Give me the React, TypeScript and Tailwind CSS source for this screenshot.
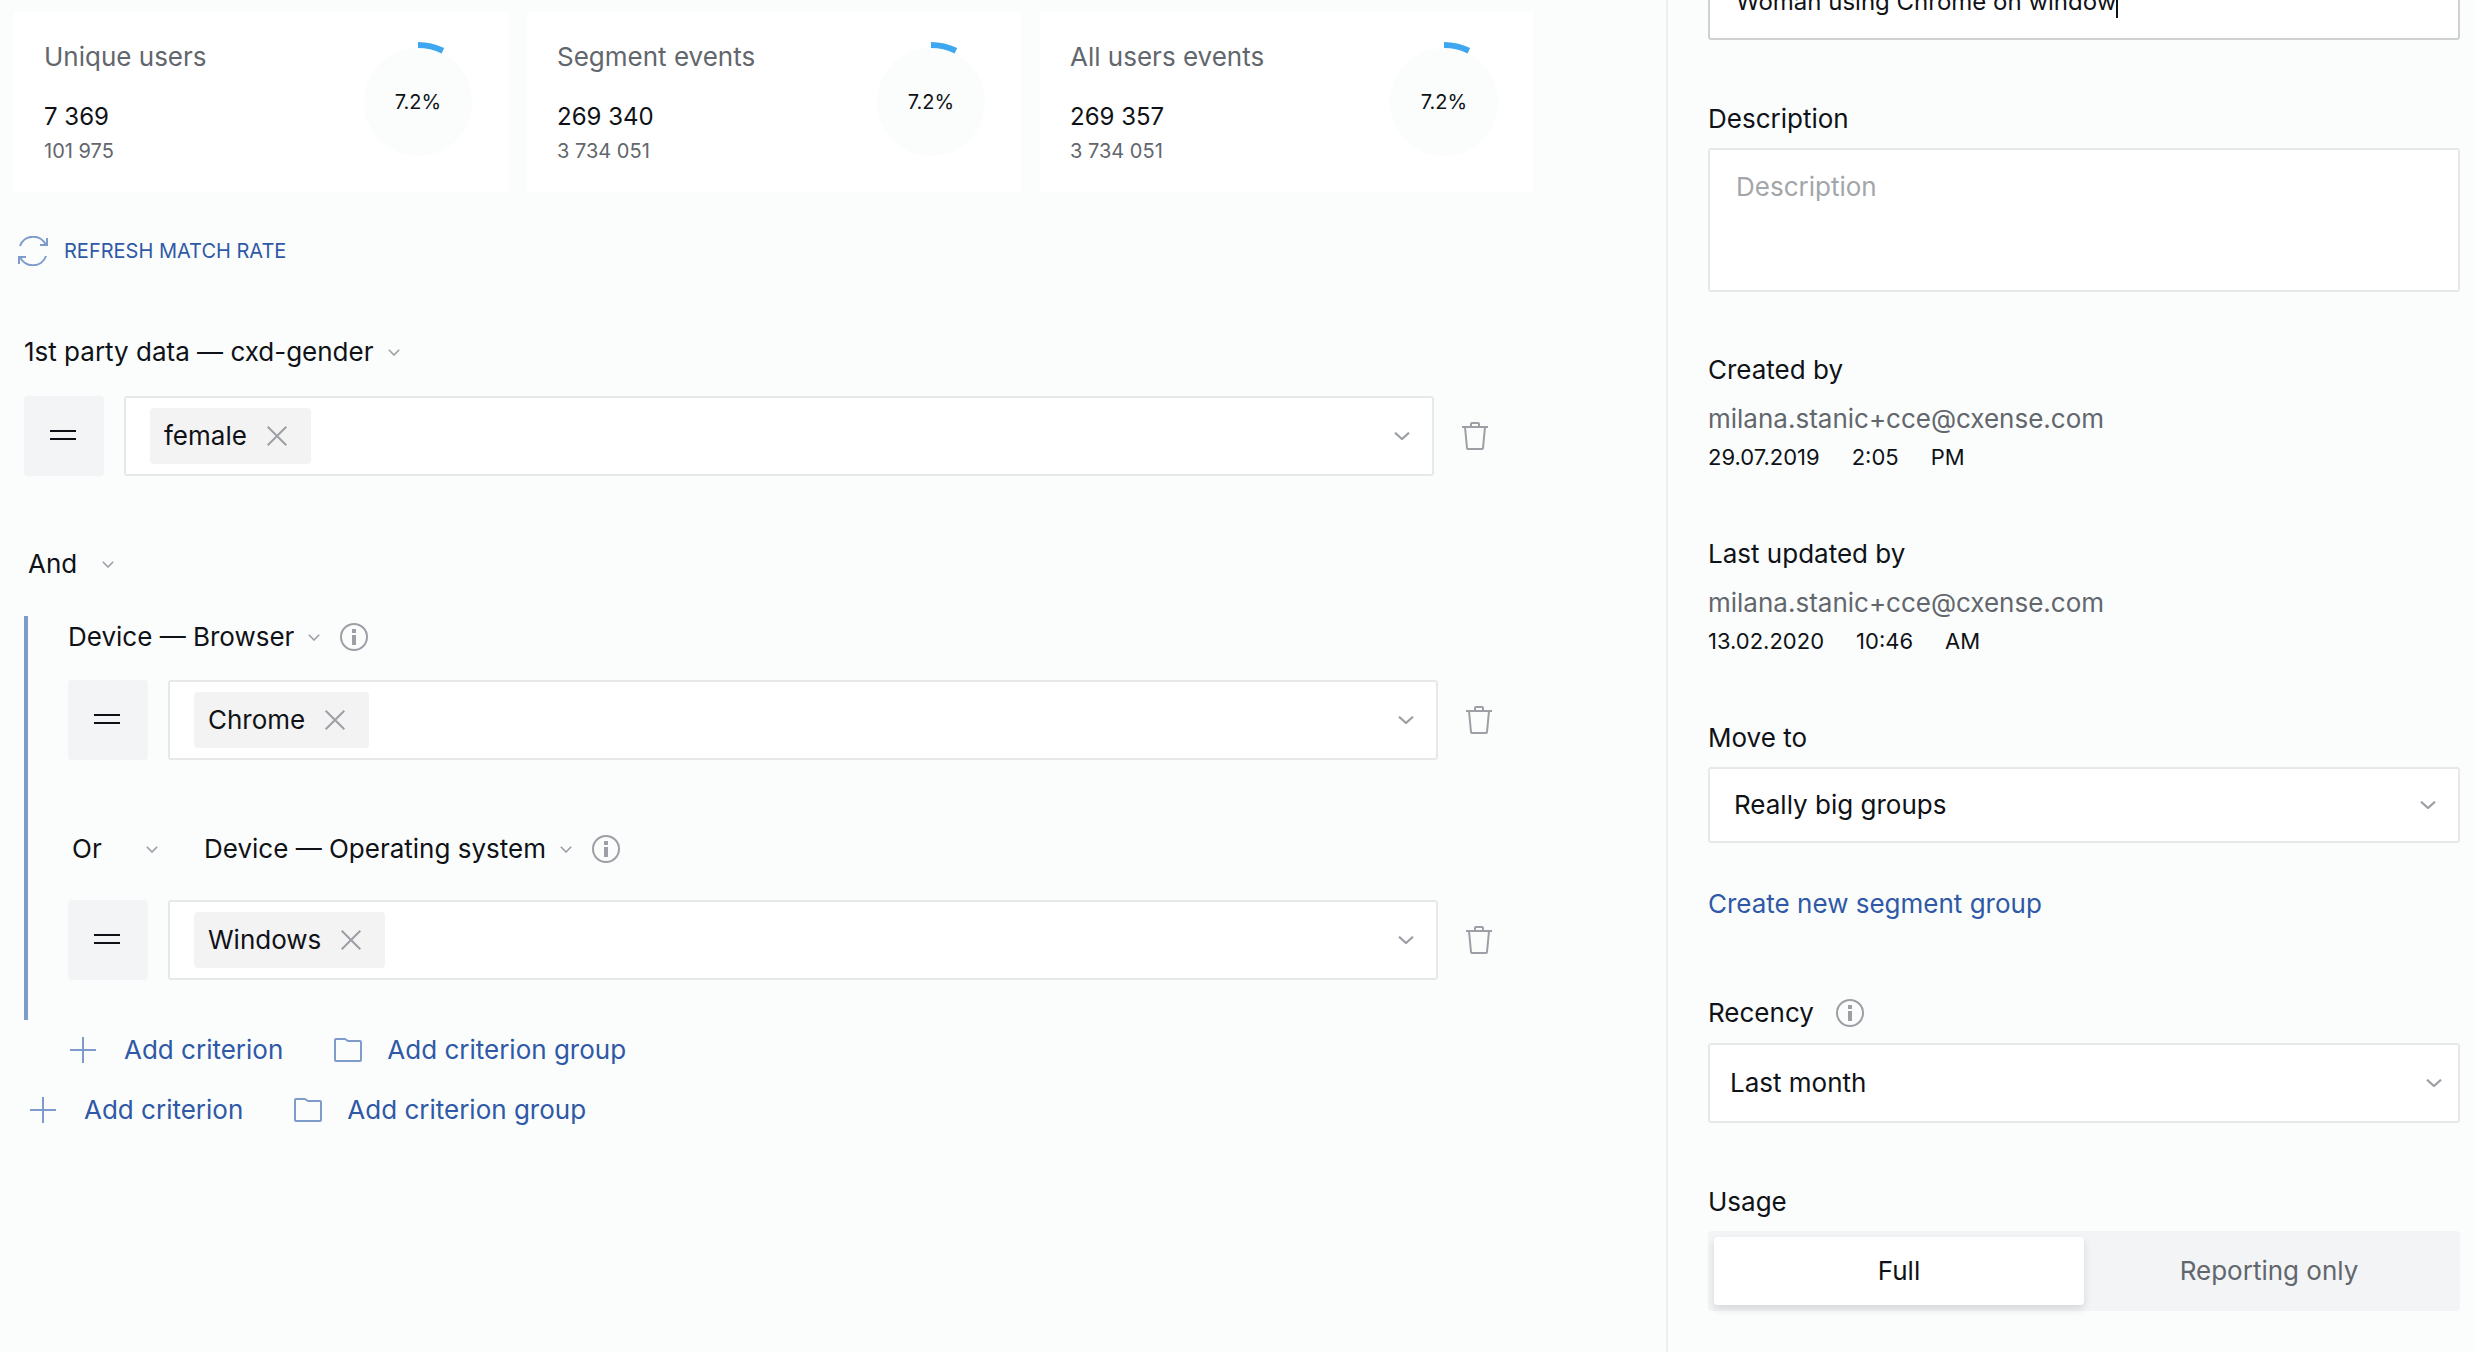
import { useId, useState } from "react";
import type { ReactNode } from "react";

const stats = [
  { label: "Unique users", value: "7 369", total: "101 975", percent: 7.2 },
  { label: "Segment events", value: "269 340", total: "3 734 051", percent: 7.2 },
  { label: "All users events", value: "269 357", total: "3 734 051", percent: 7.2 },
];

function Chevron({ small = false }: { small?: boolean }) {
  return small ? (
    <svg className="h-[7px] w-3 shrink-0 text-[#9c9fa5]" viewBox="0 0 12 7" fill="none" aria-hidden="true">
      <path d="M0.8 0.8 6 6 11.2 0.8" stroke="currentColor" strokeWidth="1.6" />
    </svg>
  ) : (
    <svg className="h-2 w-4 shrink-0 text-[#9c9fa5]" viewBox="0 0 16 8" fill="none" aria-hidden="true">
      <path d="M1 0.7 8 7 15 0.7" stroke="currentColor" strokeWidth="2.2" />
    </svg>
  );
}

function InfoButton({ about }: { about: string }) {
  return (
    <button type="button" aria-label={`About ${about}`} className="size-7 shrink-0 text-[#9c9fa5]">
      <svg viewBox="0 0 28 28" fill="none" aria-hidden="true">
        <circle cx="14" cy="14" r="13" stroke="currentColor" strokeWidth="2" />
        <path d="M12 6h4v4h-4zM12 12h4v10h-4z" fill="currentColor" />
      </svg>
    </button>
  );
}

function RefreshIcon() {
  return (
    <svg className="size-[30px] shrink-0 text-[#7f9bcb]" viewBox="0 0 30 30" fill="none" stroke="currentColor" strokeWidth="2" aria-hidden="true">
      <path d="M2 10A14 14 0 0 1 28 9" />
      <path d="M29 2V9H22" />
      <path d="M28 20A14 14 0 0 1 2 21" />
      <path d="M1 28V21H8" />
    </svg>
  );
}

function PlusIcon() {
  return (
    <svg className="size-[26px] shrink-0 text-[#7f9bcb]" viewBox="0 0 26 26" fill="none" aria-hidden="true">
      <path d="M13 0V26M0 13H26" stroke="currentColor" strokeWidth="2" />
    </svg>
  );
}

function FolderIcon() {
  return (
    <svg className="h-6 w-7 shrink-0 text-[#7f9bcb]" viewBox="0 0 28 24" fill="none" aria-hidden="true">
      <path d="M1 2Q1 1 2 1H11L14 3H26Q27 3 27 4V22Q27 23 26 23H2Q1 23 1 22Z" stroke="currentColor" strokeWidth="2" strokeLinejoin="round" />
    </svg>
  );
}

function TrashIcon() {
  return (
    <svg className="h-7 w-[26px] text-[#9c9fa5]" viewBox="0 0 26 28" fill="none" stroke="currentColor" strokeWidth="2" aria-hidden="true">
      <path d="M0 5H26" />
      <path d="M9 5V2Q9 1 10 1H16Q17 1 17 2V5" />
      <path d="M3 5 5 26Q5 27 6 27H20Q21 27 21 26L23 5" />
    </svg>
  );
}

function Donut({ percent }: { percent: number }) {
  return (
    <div className="relative size-[120px] shrink-0">
      <svg viewBox="0 0 120 120" fill="none" aria-hidden="true">
        <circle cx="60" cy="60" r="54" fill="#fbfdfc" />
        <circle cx="60" cy="60" r="57" stroke="#3fa6f0" strokeWidth="6" pathLength={100} strokeDasharray={`${percent} 100`} transform="rotate(-90 60 60)" />
      </svg>
      <span className="absolute inset-0 flex items-center justify-center text-xl">{percent}%</span>
    </div>
  );
}

function Criterion({ name, info = false }: { name: string; info?: boolean }) {
  return (
    <div className="flex h-9 items-center gap-5">
      <button type="button" className="flex items-center gap-3.5">
        {name}
        <Chevron small />
      </button>
      {info && <InfoButton about={name} />}
    </div>
  );
}

function JoinSelect({ value }: { value: string }) {
  return (
    <div className="relative flex w-[86px] items-center">
      <select aria-label="Join criteria with" defaultValue={value} className="h-9 w-full appearance-none bg-transparent leading-9">
        <option>And</option>
        <option>Or</option>
      </select>
      <span className="pointer-events-none absolute right-0">
        <Chevron small />
      </span>
    </div>
  );
}

function ValueRow({ name, value }: { name: string; value: string }) {
  return (
    <div className="flex items-center">
      <button type="button" aria-label="Equals" className="flex h-20 w-20 shrink-0 items-center justify-center rounded bg-[#f3f4f6]">
        <svg className="h-3 w-7" viewBox="0 0 28 12" fill="none" aria-hidden="true">
          <path d="M0 1H26M0 9H26" stroke="#0d0f14" strokeWidth="2" />
        </svg>
      </button>
      <div className="ml-5 flex h-20 min-w-0 flex-1 items-center rounded-[3px] border-2 border-[#e7e9e8] bg-white pr-[22px] pl-6">
        <span className="flex h-14 items-center gap-5 rounded bg-[#f3f3f3] pr-6 pl-3.5">
          {value}
          <button type="button" aria-label={`Remove ${value}`} className="size-5 text-[#9c9fa5]">
            <svg viewBox="0 0 20 20" fill="none" aria-hidden="true">
              <path d="M0.7 0.7 19.3 19.3M19.3 0.7 0.7 19.3" stroke="currentColor" strokeWidth="2" />
            </svg>
          </button>
        </span>
        <input type="text" aria-label={name} className="h-14 min-w-0 flex-1 outline-none" />
        <button type="button" aria-label={`Show values of ${name}`}>
          <Chevron />
        </button>
      </div>
      <button type="button" aria-label={`Delete ${name}`} className="ml-7 shrink-0">
        <TrashIcon />
      </button>
    </div>
  );
}

function AddActions() {
  return (
    <div className="flex h-9 items-center gap-[51px] text-[#2f59a6]">
      <button type="button" className="flex items-center gap-7">
        <PlusIcon />
        Add criterion
      </button>
      <button type="button" className="flex items-center gap-[25px]">
        <FolderIcon />
        Add criterion group
      </button>
    </div>
  );
}

function Audit({ title, email, parts }: { title: string; email: string; parts: string[] }) {
  return (
    <section>
      <h2>{title}</h2>
      <p className="mt-[13px] text-[#62666d]">{email}</p>
      <p className="mt-1.5 flex gap-8 text-[22px] leading-7">
        {parts.map((part) => (
          <span key={part}>{part}</span>
        ))}
      </p>
    </section>
  );
}

function SelectField({ id, className, iconClassName, children }: { id: string; className: string; iconClassName: string; children: ReactNode }) {
  return (
    <div className="relative flex items-center">
      <select id={id} className={`w-full appearance-none rounded-[3px] border-2 border-[#e7e9e8] bg-white leading-9 ${className}`}>
        {children}
      </select>
      <span className={`pointer-events-none absolute ${iconClassName}`}>
        <Chevron />
      </span>
    </div>
  );
}

export default function App() {
  const [name, setName] = useState("Woman using Chrome on window");
  const uid = useId();

  return (
    <div className="grid min-h-screen grid-cols-[1666fr_810fr] overflow-hidden bg-[#fbfdfc] font-[Inter,sans-serif] text-[26px] leading-9 text-[#0f1217]">
      <main className="min-w-0 pt-3 pr-[132px] pl-3.5">
        <div className="grid grid-cols-3 gap-[19px]">
          {stats.map((s) => (
            <article key={s.label} className="flex h-45 items-center justify-between bg-white pr-[30px] pl-[30px]">
              <div>
                <h2 className="text-[#62666d]">{s.label}</h2>
                <p className="mt-6 text-2xl leading-9">{s.value}</p>
                <p className="mt-0.5 text-xl text-[#62666d]">{s.total}</p>
              </div>
              <Donut percent={s.percent} />
            </article>
          ))}
        </div>

        <button type="button" className="mt-[43px] ml-1 flex h-8 items-center gap-4 text-xl text-[#2f59a6]">
          <RefreshIcon />
          REFRESH MATCH RATE
        </button>

        <section className="mt-[67px] pl-2.5">
          <Criterion name="1st party data — cxd-gender" />
          <div className="mt-[26px] pr-[46px]">
            <ValueRow name="1st party data — cxd-gender" value="female" />
          </div>

          <div className="mt-[70px] pl-1">
            <JoinSelect value="And" />
          </div>

          <div className="mt-[34px] border-l-4 border-[#7f9bcb] pt-[3px] pr-[42px] pb-10 pl-10">
            <Criterion name="Device — Browser" info />
            <div className="mt-[25px]">
              <ValueRow name="Device — Browser" value="Chrome" />
            </div>
            <div className="mt-[71px] flex gap-[46px] pl-1">
              <JoinSelect value="Or" />
              <Criterion name="Device — Operating system" info />
            </div>
            <div className="mt-[33px]">
              <ValueRow name="Device — Operating system" value="Windows" />
            </div>
          </div>

          <div className="mt-3 pl-[46px]">
            <AddActions />
          </div>
          <div className="mt-6 pl-1.5">
            <AddActions />
          </div>
        </section>
      </main>

      <aside className="min-w-0 border-l-2 border-[#eef0ef] pr-4 pl-10">
        <div className="-mt-10 flex h-20 items-center rounded-[3px] border-2 border-[#cfd1d0] bg-white px-[26px] pt-1 text-2xl leading-9">
          <input type="text" aria-label="Segment name" value={name} onChange={(e) => setName(e.target.value)} className="field-sizing-content caret-transparent outline-none" />
          <span className="h-8 w-0.5 bg-[#0f1217]" aria-hidden="true" />
        </div>

        <label htmlFor={`${uid}-desc`} className="mt-[61px] block">
          Description
        </label>
        <textarea id={`${uid}-desc`} placeholder="Description" className="mt-[11px] block h-36 w-full resize-none rounded-[3px] border-2 border-[#e7e9e8] bg-white px-[26px] py-[19px] leading-9 placeholder:text-[#a3a6a9]" />

        <div className="mt-[60px] flex flex-col gap-[65px]">
          <Audit title="Created by" email="milana.stanic+cce@cxense.com" parts={["29.07.2019", "2:05", "PM"]} />
          <Audit title="Last updated by" email="milana.stanic+cce@cxense.com" parts={["13.02.2020", "10:46", "AM"]} />
        </div>

        <label htmlFor={`${uid}-move`} className="mt-[65px] mb-[11px] block">
          Move to
        </label>
        <SelectField id={`${uid}-move`} className="h-19 px-6" iconClassName="right-6">
          <option>Really big groups</option>
        </SelectField>

        <a href="#new-group" className="mt-[43px] block text-[#2f59a6]">
          Create new segment group
        </a>

        <div className="mt-[73px] mb-3 flex items-center gap-[22px]">
          <label htmlFor={`${uid}-recency`}>Recency</label>
          <InfoButton about="Recency" />
        </div>
        <SelectField id={`${uid}-recency`} className="h-20 px-5" iconClassName="right-[18px]">
          <option>Last month</option>
        </SelectField>

        <fieldset className="mt-[61px]">
          <legend>Usage</legend>
          <div className="mt-[11px] grid h-20 grid-cols-2 rounded bg-[#f3f4f6] p-1.5">
            {["Full", "Reporting only"].map((option) => (
              <label key={option} className="relative flex cursor-pointer items-center justify-center rounded text-[#62666d] has-checked:bg-white has-checked:text-[#0f1217] has-checked:shadow-[0_4px_8px_rgba(0,0,0,0.12)]">
                <input type="radio" name={`${uid}-usage`} defaultChecked={option === "Full"} className="absolute inset-0 appearance-none" />
                {option}
              </label>
            ))}
          </div>
        </fieldset>
      </aside>
    </div>
  );
}
